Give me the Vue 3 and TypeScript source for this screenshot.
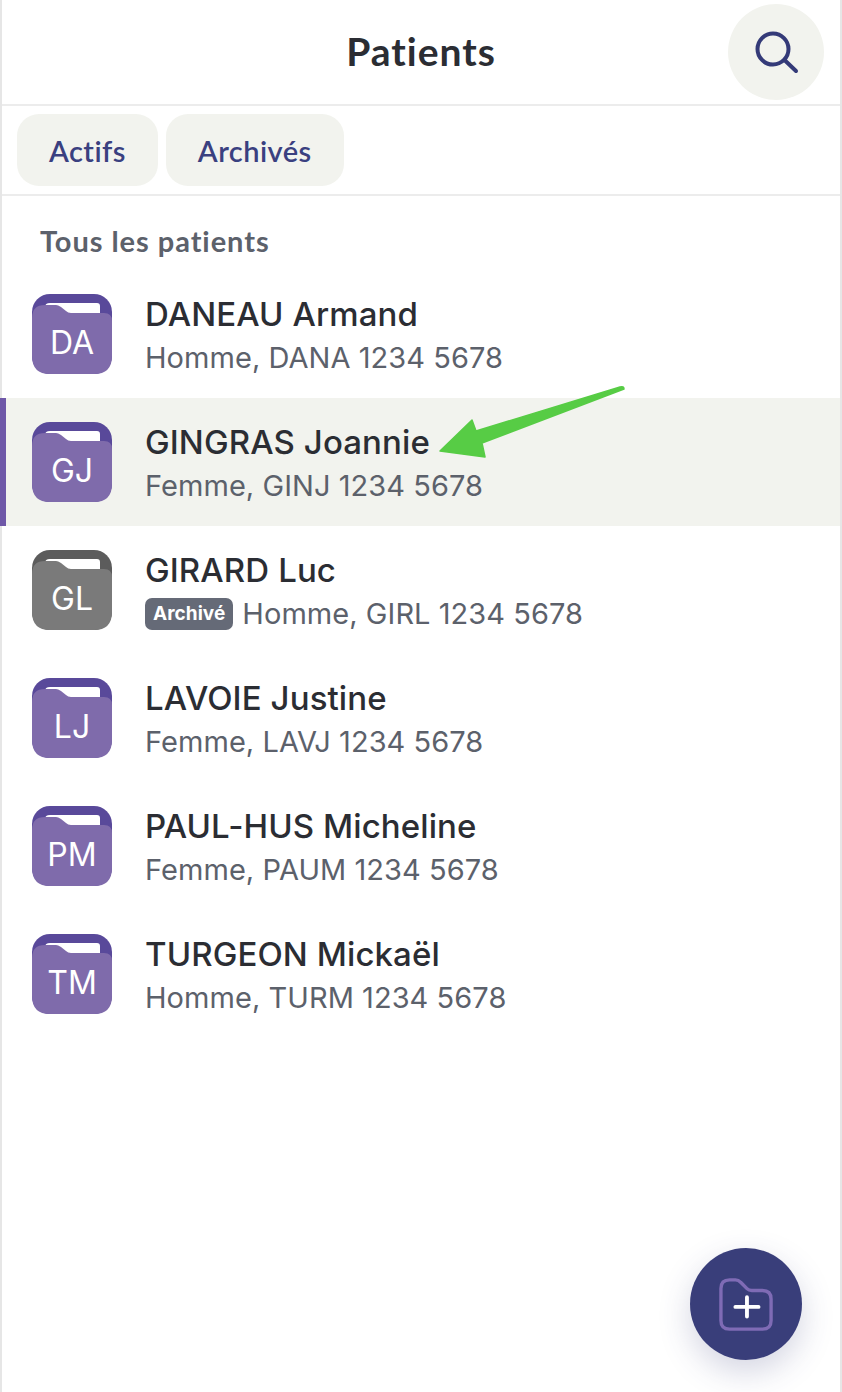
<script setup lang="ts">
interface Patient {
  initials: string
  name: string
  detail: string
  selected?: boolean
  archived?: boolean
}

const patients: Patient[] = [
  { initials: 'DA', name: 'DANEAU Armand', detail: 'Homme, DANA 1234 5678' },
  { initials: 'GJ', name: 'GINGRAS Joannie', detail: 'Femme, GINJ 1234 5678', selected: true },
  { initials: 'GL', name: 'GIRARD Luc', detail: 'Homme, GIRL 1234 5678', archived: true },
  { initials: 'LJ', name: 'LAVOIE Justine', detail: 'Femme, LAVJ 1234 5678' },
  { initials: 'PM', name: 'PAUL-HUS Micheline', detail: 'Femme, PAUM 1234 5678' },
  { initials: 'TM', name: 'TURGEON Mickaël', detail: 'Homme, TURM 1234 5678' },
]
</script>

<template>
  <div class="page">
    <header class="header">
      <span></span>
      <h1 class="title">Patients</h1>
      <button class="search" aria-label="Rechercher">
        <svg width="48" height="48" viewBox="0 0 48 48" fill="none" stroke="#343a78" stroke-width="4" stroke-linecap="round">
          <circle cx="21" cy="21" r="15.5" />
          <path d="M33 32.5L44 43" />
        </svg>
      </button>
    </header>

    <nav class="tabs">
      <button class="tab">Actifs</button>
      <button class="tab">Archivés</button>
    </nav>

    <h2 class="section">Tous les patients</h2>

    <ul class="list">
      <li v-for="p in patients" :key="p.initials" class="row" :class="{ selected: p.selected }">
        <div class="avatar" :class="{ grey: p.archived }">
          <svg class="folder" width="80" height="80" viewBox="0 0 80 80">
            <rect class="back" width="80" height="80" rx="18" />
            <path d="M13 13Q13 9 18 9H65Q68 9 68 12V24H13Z" fill="#fff" />
            <path class="front" d="M0 24Q0 11 13 11H24Q26 11 29 13L34 17Q36 19 39 19H72Q80 19 80 27V62Q80 80 62 80H18Q0 80 0 62Z" />
          </svg>
          <span class="initials">{{ p.initials }}</span>
        </div>
        <div class="info">
          <div class="name">{{ p.name }}</div>
          <div class="detail">
            <span v-if="p.archived" class="badge">Archivé</span>{{ p.detail }}
          </div>
        </div>
      </li>
    </ul>

    <svg class="arrow" width="190" height="76" viewBox="436 384 190 76">
      <path d="M440 451L472 420L476 431L620 387Q624 386 624 389L482 443L485 457Z" fill="#57cc45" stroke="#57cc45" stroke-width="1.5" stroke-linejoin="round" />
    </svg>

    <button class="fab" aria-label="Nouveau patient">
      <svg width="54" height="54" viewBox="0 0 56 56" fill="none">
        <path d="M2 12Q2 3 11 3H17Q20 3 23 6L29 12Q31 14 34 14H45Q54 14 54 23V45Q54 54 45 54H11Q2 54 2 45Z" stroke="#7f6bb5" stroke-width="3.5" />
        <path d="M29 21V41M17 31H41" stroke="#fff" stroke-width="4" stroke-linecap="round" />
      </svg>
    </button>
  </div>
</template>

<style scoped>
.page {
  position: relative;
  box-sizing: border-box;
  width: 842px;
  height: 1392px;
  background: #fff;
  border-left: 2px solid #e6e6e6;
  border-right: 2px solid #e6e6e6;
  font-family: Inter, "Liberation Sans", sans-serif;
  color: #2b2d33;
}

.header {
  display: grid;
  grid-template-columns: 1fr auto 1fr;
  align-items: center;
  height: 104px;
  padding: 0 16px;
  border-bottom: 2px solid #ececec;
}

.title {
  margin: -2px 0 0;
  font-family: Lato, sans-serif;
  font-size: 39px;
  font-weight: 700;
  letter-spacing: 1px;
  color: #2b2d33;
}

.search {
  justify-self: end;
  display: flex;
  align-items: center;
  justify-content: center;
  width: 96px;
  height: 96px;
  padding: 0;
  border: 0;
  border-radius: 50%;
  background: #f2f3ee;
}

.tabs {
  display: flex;
  gap: 8px;
  height: 90px;
  box-sizing: border-box;
  padding: 8px 15px;
  border-bottom: 2px solid #ececec;
}

.tab {
  height: 72px;
  padding: 0 32px;
  border: 0;
  border-radius: 22px;
  background: #f2f3ee;
  font-family: Lato, sans-serif;
  font-size: 29px;
  font-weight: 600;
  letter-spacing: 0.45px;
  color: #3a4080;
}

.section {
  margin: 0;
  padding: 26px 0 0 38px;
  height: 48px;
  font-family: Lato, sans-serif;
  font-size: 29px;
  line-height: 38px;
  font-weight: 700;
  letter-spacing: 0.95px;
  color: #5c616b;
}

.list {
  margin: 0;
  padding: 0;
  list-style: none;
}

.row {
  display: flex;
  align-items: center;
  gap: 33px;
  box-sizing: border-box;
  height: 128px;
  padding-left: 30px;
}

.row.selected {
  margin-left: -2px;
  padding-left: 26px;
  border-left: 6px solid #6f58a8;
  background: #f2f3ee;
}

.avatar {
  position: relative;
  flex: none;
  display: flex;
  align-items: center;
  justify-content: center;
  width: 80px;
  height: 80px;
}

.folder {
  position: absolute;
  inset: 0;
}

.back {
  fill: #59499a;
}

.front {
  fill: #7f6bab;
}

.grey .back {
  fill: #5c5c5c;
}

.grey .front {
  fill: #7a7a7a;
}

.initials {
  position: relative;
  margin-top: 18px;
  font-size: 32px;
  line-height: 38px;
  color: #fff;
}

.info {
  display: flex;
  flex-direction: column;
  gap: 4px;
  padding-top: 4px;
}

.name {
  font-size: 33px;
  line-height: 40px;
  font-weight: 500;
  letter-spacing: 0.1px;
  color: #2b2d33;
}

.detail {
  display: flex;
  align-items: center;
  font-size: 29px;
  line-height: 40px;
  letter-spacing: 0.05px;
  color: #5c616b;
}

.badge {
  box-sizing: border-box;
  height: 32px;
  margin-right: 9px;
  padding: 0 8px;
  border-radius: 7px;
  background: #656a77;
  font-size: 19px;
  line-height: 32px;
  font-weight: 700;
  color: #fff;
}

.arrow {
  position: absolute;
  left: 434px;
  top: 384px;
}

.fab {
  position: absolute;
  left: 688px;
  top: 1248px;
  display: flex;
  align-items: center;
  justify-content: center;
  width: 112px;
  height: 112px;
  padding: 0;
  border: 0;
  border-radius: 50%;
  background: #393e7a;
  box-shadow: 0 12px 32px rgba(57, 62, 122, 0.22);
}
</style>
